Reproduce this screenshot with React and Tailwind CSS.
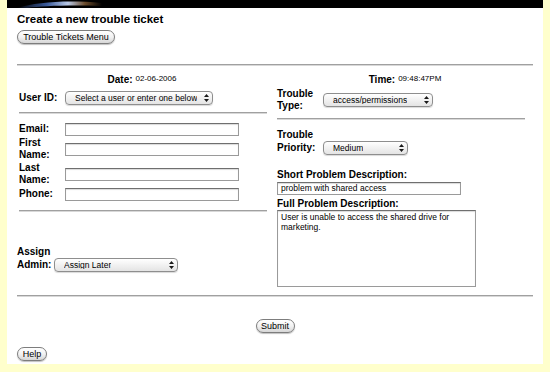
const ui = { fontFamily: '"Liberation Sans", Arial, sans-serif' };
const lbl = { fontFamily: '"Liberation Sans", Arial, sans-serif' };

function AquaButton({ children, className = '' }) {
  return (
    <button
      type="button"
      style={ui}
      className={`flex h-[14px] items-center justify-center rounded-full border border-[#7d7d7d] bg-gradient-to-b from-white via-[#f2f2f2] to-[#d6d6d6] text-[9px] leading-none text-black shadow-[0_1px_1px_rgba(0,0,0,0.25)] ${className}`}
    >
      {children}
    </button>
  );
}

function AquaSelect({ value, className = '' }) {
  return (
    <div
      style={ui}
      className={`flex h-[14px] shrink-0 items-center rounded-[4px] border border-[#8e8e8e] bg-gradient-to-b from-white to-[#e4e4e4] pl-[9px] text-[8.5px] leading-none text-black shadow-[0_1px_1px_rgba(0,0,0,0.15)] ${className}`}
    >
      <span className="truncate">{value}</span>
      <span className="ml-auto flex h-full w-[12px] items-center justify-center">
        <svg width="5" height="8" viewBox="0 0 5 8">
          <path d="M2.5 0L5 3H0z M2.5 8L0 5h5z" fill="#1a1a1a" />
        </svg>
      </span>
    </div>
  );
}

function TextBox({ value = '', className = '' }) {
  return (
    <div
      style={ui}
      className={`flex h-[13px] items-center border border-[#9a9a9a] border-t-[#6f6f6f] bg-white px-[3px] text-[8.5px] leading-none text-black shadow-[inset_0_1px_1px_rgba(0,0,0,0.15)] ${className}`}
    >
      {value}
    </div>
  );
}

function Rule({ className = '' }) {
  return <div className={`h-[2px] border-t border-[#a0a0a0] bg-[#d8d8d8] ${className}`} />;
}

function FieldRow({ label, className = '', children }) {
  return (
    <div className={`flex items-center ${className}`}>
      <div style={lbl} className="w-[46px] text-[10px] font-bold leading-[12px]">
        {label}
      </div>
      {children}
    </div>
  );
}

export default function App() {
  return (
    <div className="h-[372px] w-[550px] overflow-hidden bg-[#ffffcc]">
      <div className="ml-[7px] h-[364px] w-[536px] bg-white">
        {/* header strip */}
        <div className="h-[8px] w-full bg-black">
          <svg width="120" height="8" viewBox="0 0 120 8">
            <defs>
              <linearGradient id="swirl" x1="0" x2="1">
                <stop offset="0" stopColor="#000" />
                <stop offset="0.35" stopColor="#3a5a9a" />
                <stop offset="0.6" stopColor="#b9c9e6" />
                <stop offset="0.8" stopColor="#6a4a2a" />
                <stop offset="1" stopColor="#000" />
              </linearGradient>
            </defs>
            <path d="M10 8 C30 2, 60 0, 95 3 L95 6 C60 5, 35 6, 20 8 Z" fill="url(#swirl)" />
          </svg>
        </div>

        <div className="pl-[10px] pr-[10px] text-black">
          <h1 style={lbl} className="mt-[4px] text-[11.5px] font-bold leading-[14px]">
            Create a new trouble ticket
          </h1>
          <AquaButton className="mt-[4px] w-[98px]">Trouble Tickets Menu</AquaButton>

          <Rule className="mt-[20px]" />

          <div className="flex gap-[10px]">
            {/* left column */}
            <div className="w-[250px]">
              <div className="mt-[7px] flex h-[12px] items-center justify-center gap-[3px]">
                <span style={lbl} className="text-[10px] font-bold">Date:</span>
                <span style={ui} className="text-[8px]">02-06-2006</span>
              </div>
              <FieldRow label="User ID:" className="mt-[6px] pl-[2px]">
                <AquaSelect value="Select a user or enter one below" className="w-[148px]" />
              </FieldRow>
              <Rule className="ml-[2px] mt-[7px]" />

              <div className="flex flex-col gap-[1px] pl-[2px]">
                <FieldRow label="Email:" className="mt-[8px] h-[14px]">
                  <TextBox className="w-[174px]" />
                </FieldRow>
                <FieldRow label={<>First<br />Name:</>} className="h-[24px]">
                  <TextBox className="w-[174px]" />
                </FieldRow>
                <FieldRow label={<>Last<br />Name:</>} className="h-[24px]">
                  <TextBox className="w-[174px]" />
                </FieldRow>
                <FieldRow label="Phone:" className="h-[14px]">
                  <TextBox className="w-[174px]" />
                </FieldRow>
              </div>
              <Rule className="ml-[2px] mt-[9px]" />

              <div className="mt-[33px] flex items-end">
                <div style={lbl} className="w-[37px] whitespace-nowrap text-[10px] font-bold leading-[13px]">
                  Assign
                  <br />
                  Admin:
                </div>
                <AquaSelect value="Assign Later" className="mb-[-1px] w-[124px]" />
              </div>
            </div>

            {/* right column */}
            <div className="w-[256px]">
              <div className="mt-[7px] flex h-[12px] items-center justify-center gap-[3px]">
                <span style={lbl} className="text-[10px] font-bold">Time:</span>
                <span style={ui} className="text-[8px]">09:48:47PM</span>
              </div>
              <div className="mt-[3px] flex h-[24px] items-center">
                <div style={lbl} className="w-[46px] text-[10px] font-bold leading-[12px]">
                  Trouble
                  <br />
                  Type:
                </div>
                <AquaSelect value="access/permissions" className="w-[110px]" />
              </div>
              <Rule className="mt-[6px] w-[248px]" />

              <div className="mt-[8px] flex items-end">
                <div style={lbl} className="w-[46px] text-[10px] font-bold leading-[13px]">
                  Trouble
                  <br />
                  Priority:
                </div>
                <AquaSelect value="Medium" className="mb-[-1px] w-[85px]" />
              </div>

              <div style={lbl} className="mt-[15px] text-[10px] font-bold leading-[12px]">
                Short Problem Description:
              </div>
              <TextBox value="problem with shared access" className="mt-[1px] w-[184px]" />
              <div style={lbl} className="mt-[3px] text-[10px] font-bold leading-[12px]">
                Full Problem Description:
              </div>
              <div
                style={ui}
                className="h-[77px] w-[199px] border border-[#9a9a9a] border-t-[#6f6f6f] bg-white px-[3px] pt-[1px] text-[8.5px] leading-[10px] shadow-[inset_0_1px_1px_rgba(0,0,0,0.15)]"
              >
                User is unable to access the shared drive for marketing.
              </div>
            </div>
          </div>

          <Rule className="mt-[8px]" />

          <div className="mt-[22px] flex justify-center">
            <AquaButton className="w-[39px]">Submit</AquaButton>
          </div>
          <AquaButton className="mt-[14px] w-[30px]">Help</AquaButton>
        </div>
      </div>
    </div>
  );
}
